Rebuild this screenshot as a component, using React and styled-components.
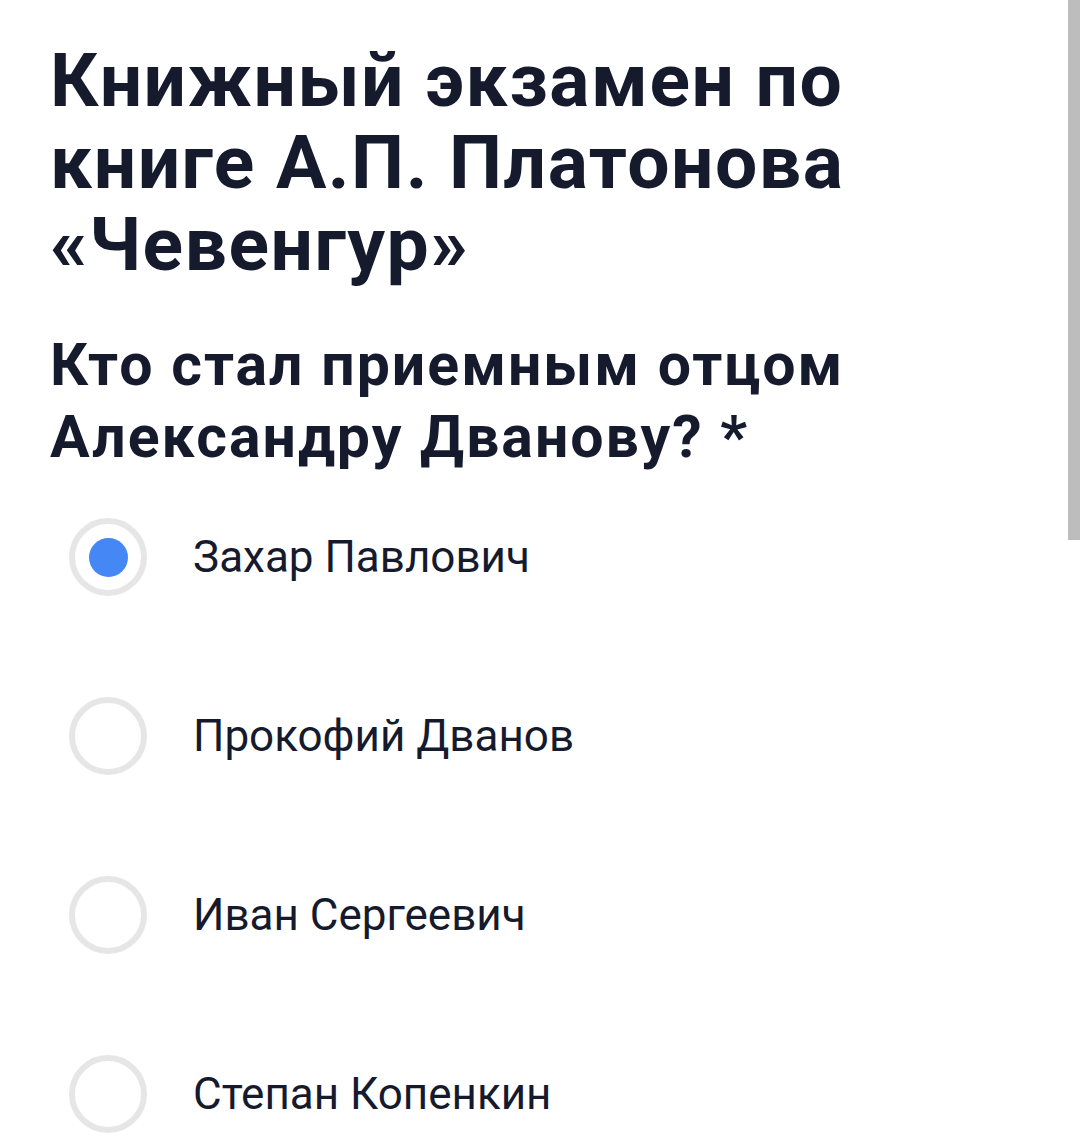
import React from "react";
import styled, { createGlobalStyle } from "styled-components";

const GlobalStyle = createGlobalStyle`
  html, body {
    margin: 0;
    padding: 0;
    background: #fff;
    overflow: hidden;
  }
  body {
    font-family: Roboto, "Noto Sans", sans-serif;
    color: #151a2d;
  }
`;

const Page = styled.div`
  position: relative;
  width: 1080px;
  height: 1148px;
  padding: 39px 0 0 50px;
  box-sizing: border-box;
`;

const Title = styled.h1`
  margin: 0;
  font-size: 75px;
  line-height: 82px;
  font-weight: 700;
  letter-spacing: 1.5px;
`;

const Question = styled.h2`
  margin: 44px 0 0;
  font-size: 59px;
  line-height: 72px;
  font-weight: 700;
  letter-spacing: 2px;
`;

const Options = styled.div`
  display: flex;
  flex-direction: column;
  gap: 101px;
  margin-top: 45px;
  padding-left: 19px;
`;

const Option = styled.label`
  display: flex;
  align-items: center;
  gap: 46px;
  cursor: pointer;
`;

const Radio = styled.span`
  width: 78px;
  height: 78px;
  box-sizing: border-box;
  border-radius: 50%;
  border: 6px solid #e6e6e6;
  display: flex;
  align-items: center;
  justify-content: center;
  flex-shrink: 0;

  &::after {
    content: "";
    width: 39px;
    height: 39px;
    border-radius: 50%;
    background: ${(p) => (p.$checked ? "#4487f5" : "transparent")};
  }
`;

const OptionText = styled.span`
  font-size: 44px;
  font-weight: 400;
  line-height: 52px;
`;

const Scrollbar = styled.div`
  position: absolute;
  top: 0;
  right: 0;
  width: 12px;
  height: 540px;
  background: #bdbdbd;
`;

const answers = [
  "Захар Павлович",
  "Прокофий Дванов",
  "Иван Сергеевич",
  "Степан Копенкин",
];

export default function App() {
  return (
    <Page>
      <GlobalStyle />
      <Title>
        Книжный экзамен по
        <br />
        книге А.П. Платонова
        <br />
        «Чевенгур»
      </Title>
      <Question>
        Кто стал приемным отцом
        <br />
        Александру Дванову? *
      </Question>
      <Options>
        {answers.map((a, i) => (
          <Option key={a}>
            <Radio $checked={i === 0} />
            <OptionText>{a}</OptionText>
          </Option>
        ))}
      </Options>
      <Scrollbar />
    </Page>
  );
}
